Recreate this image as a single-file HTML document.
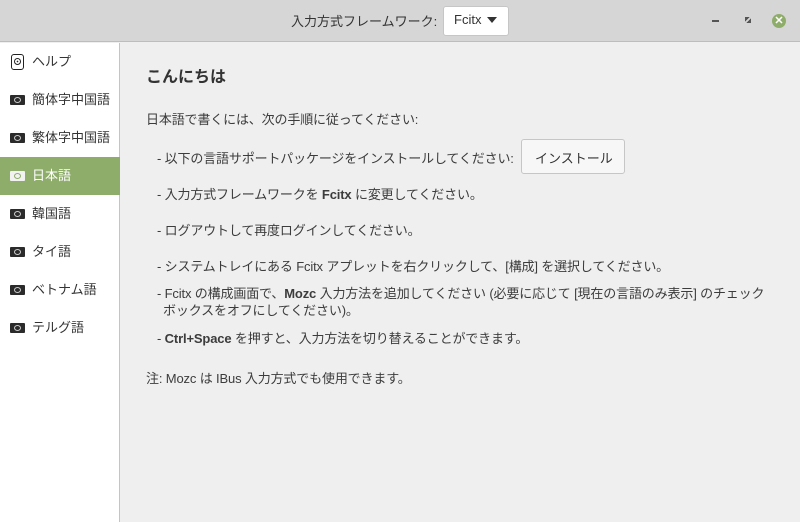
<!DOCTYPE html>
<html><head><meta charset="utf-8"><style>
*{margin:0;padding:0;box-sizing:border-box}
body{width:800px;height:522px;overflow:hidden;background:#efefef;font-family:"Liberation Sans","Noto Sans CJK JP",sans-serif;font-size:13px;color:#3c3c3c;position:relative}
.hdr{position:absolute;left:0;top:0;width:800px;height:42px;background:#d6d6d6;border-bottom:1px solid #bdbdbd}
.side{position:absolute;left:0;top:43px;width:120px;height:479px;background:#fff;border-right:1px solid #c4c4c4}
.row{position:absolute;left:0;width:120px;height:38px;line-height:38px;padding-left:32px;font-size:13px;color:#333}
.row.sel{background:#8fad6a;color:#fff}
.flag{position:absolute;left:10px;top:14px;width:15px;height:10px;background:#2b2b2b;border-radius:1px}
.flag::after{content:"";position:absolute;left:4px;top:2px;width:5px;height:4px;border:1px solid #ccc;border-radius:50%}
.sel .flag{background:#f2f2f2}.sel .flag::after{border-color:#8fad6a}
.t{position:absolute;white-space:nowrap}
.c{letter-spacing:-0.15px}
.btn{position:absolute;background:#f7f7f7;border:1px solid #c6c6c6;border-radius:3px}
</style></head><body>
<div class="hdr">
<div class="t" style="left:291px;top:11px;font-size:13px;color:#333">入力方式フレームワーク:</div>
<div class="btn" style="left:443px;top:6px;width:66px;height:30px;background:#fff"></div>
<div class="t" style="left:454px;top:12px;color:#333">Fcitx</div>
<div class="t" style="left:487px;top:17px;width:0;height:0;border-left:5px solid transparent;border-right:5px solid transparent;border-top:6px solid #333"></div>
<div class="t" style="left:712px;top:20px;width:7px;height:2px;background:#555"></div>
<div class="t" style="left:745px;top:17px;width:6px;height:6px;background:linear-gradient(135deg,#555 40%,transparent 40%,transparent 60%,#555 60%)"></div>
<div class="t" style="left:772px;top:14px;width:14px;height:14px;border-radius:50%;background:#8fad6a;color:#fff;font-size:11px;font-weight:bold;line-height:14px;text-align:center">✕</div>
</div>
<div class="side">
<div class="row" style="top:0"><div class="t" style="left:11px;top:11px;width:13px;height:16px;border:1.5px solid #222;border-radius:3px"></div><div class="t" style="left:14px;top:15px;width:7px;height:7px;border:1px solid #222;border-radius:50%;background:radial-gradient(circle,#222 20%,transparent 25%)"></div>ヘルプ</div>
<div class="row" style="top:38px"><div class="flag"></div>簡体字中国語</div>
<div class="row" style="top:76px"><div class="flag"></div>繁体字中国語</div>
<div class="row sel" style="top:114px"><div class="flag"></div>日本語</div>
<div class="row" style="top:152px"><div class="flag"></div>韓国語</div>
<div class="row" style="top:190px"><div class="flag"></div>タイ語</div>
<div class="row" style="top:228px"><div class="flag"></div>ベトナム語</div>
<div class="row" style="top:266px"><div class="flag"></div>テルグ語</div>
</div>
<div class="t" style="left:146px;top:63px;font-size:16px;font-weight:bold;color:#333">こんにちは</div>
<div class="t c" style="left:146px;top:109px">日本語で書くには、次の手順に従ってください:</div>
<div class="t c" style="left:157px;top:148px">- 以下の言語サポートパッケージをインストールしてください:</div>
<div class="btn" style="left:521px;top:139px;width:104px;height:35px"></div>
<div class="t" style="left:535px;top:148px;color:#333">インストール</div>
<div class="t c" style="left:157px;top:184px">- 入力方式フレームワークを <b>Fcitx</b> に変更してください。</div>
<div class="t c" style="left:157px;top:220px">- ログアウトして再度ログインしてください。</div>
<div class="t c" style="left:157px;top:256px">- システムトレイにある Fcitx アプレットを右クリックして、[構成] を選択してください。</div>
<div class="t c" style="left:157px;top:283px">- Fcitx の構成画面で、<b>Mozc</b> 入力方法を追加してください (必要に応じて [現在の言語のみ表示] のチェック</div>
<div class="t c" style="left:163px;top:300px">ボックスをオフにしてください)。</div>
<div class="t c" style="left:157px;top:328px">- <b>Ctrl+Space</b> を押すと、入力方法を切り替えることができます。</div>
<div class="t c" style="left:146px;top:368px">注: Mozc は IBus 入力方式でも使用できます。</div>
</body></html>
